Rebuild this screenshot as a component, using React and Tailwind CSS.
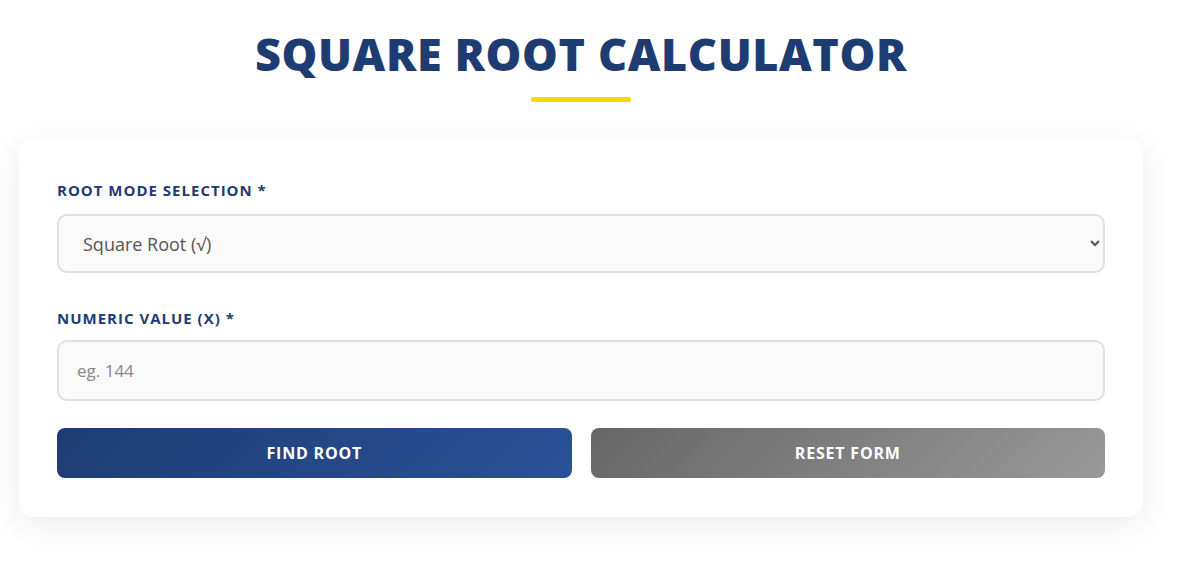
import React, { useState } from 'react';

const font = { fontFamily: '"Open Sans", "Liberation Sans", sans-serif' };

export default function App() {
  const [mode, setMode] = useState('square');
  const [value, setValue] = useState('');

  return (
    <div className="min-h-screen bg-white pl-[19px] pr-[37px] pt-[24px]" style={font}>
      {/* Header */}
      <div className="flex flex-col items-center">
        <h1 className="text-[45px] leading-[60px] font-extrabold tracking-[0.6px] text-[#1e3c72] uppercase">
          Square Root Calculator
        </h1>
        <div className="mt-[13px] w-[100px] h-[5px] rounded-full bg-[#ffd700]" />
      </div>

      {/* Calculator card */}
      <div className="mt-[37px] bg-white rounded-[15px] shadow-[0_8px_30px_rgba(0,0,0,0.08)] px-[38px] pt-[40px] pb-[39px]">
        <label className="block text-[15px] leading-[22px] font-bold tracking-[1px] text-[#1e3c72] uppercase">
          Root Mode Selection *
        </label>
        <select
          value={mode}
          onChange={(e) => setMode(e.target.value)}
          className="mt-[13px] w-full h-[59px] rounded-[10px] border-2 border-[#e0e0e0] bg-[#fafafa] pl-[20px] pr-[10px] text-[18px] text-[#555] outline-none"
          style={font}
        >
          <option value="square">Square Root (√)</option>
          <option value="cube">Cube Root (∛)</option>
          <option value="nth">Nth Root</option>
        </select>

        <label className="mt-[34px] block text-[15px] leading-[22px] font-bold tracking-[1px] text-[#1e3c72] uppercase">
          Numeric Value (x) *
        </label>
        <input
          type="text"
          value={value}
          onChange={(e) => setValue(e.target.value)}
          placeholder="eg. 144"
          className="mt-[11px] w-full h-[61px] rounded-[10px] border-2 border-[#e0e0e0] bg-[#fafafa] px-[18px] text-[17px] text-[#555] placeholder:text-[#888] outline-none"
          style={font}
        />

        <div className="mt-[27px] grid grid-cols-2 gap-[19px]">
          <button className="h-[50px] rounded-[8px] bg-[linear-gradient(135deg,#1e3c72,#2a5298)] text-white text-[16px] font-bold tracking-[0.8px] uppercase">
            Find Root
          </button>
          <button
            onClick={() => { setValue(''); setMode('square'); }}
            className="h-[50px] rounded-[8px] bg-[linear-gradient(135deg,#666666,#999999)] text-white text-[16px] font-bold tracking-[0.8px] uppercase"
          >
            Reset Form
          </button>
        </div>
      </div>
    </div>
  );
}
